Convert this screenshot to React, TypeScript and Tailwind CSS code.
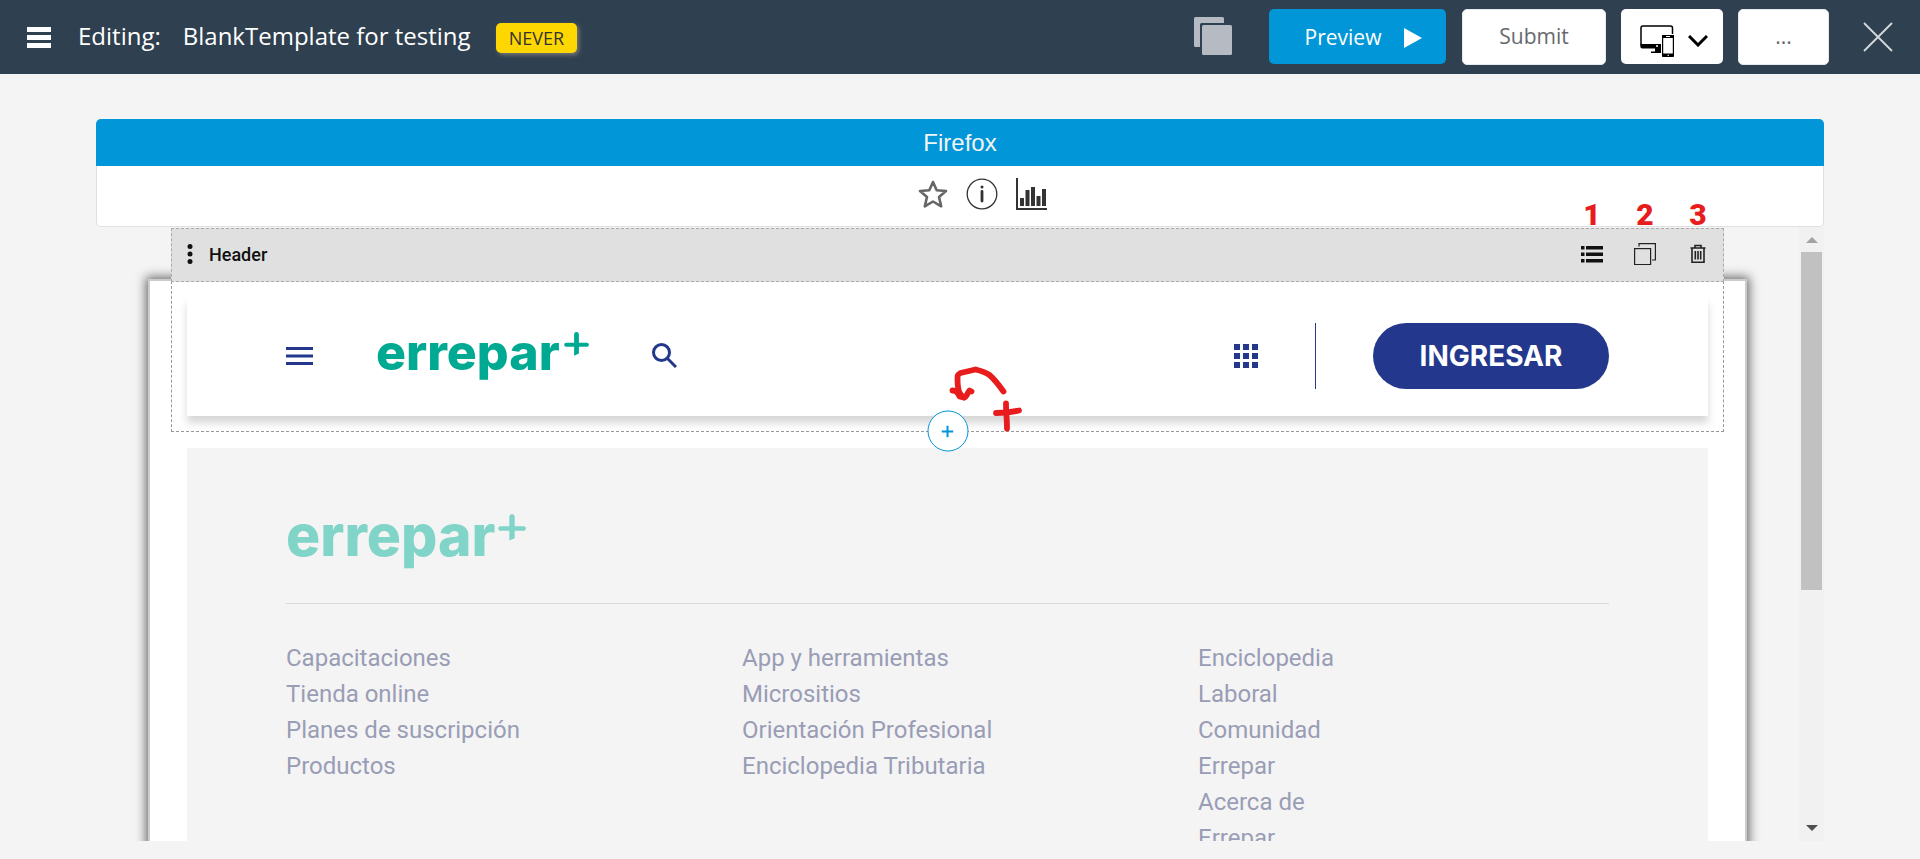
import React from "react";

const NOTE = "#e81c1c";

function Logo({ large = false }: { large?: boolean }) {
  return (
    <a
      href="#"
      aria-label="errepar+"
      className={
        large
          ? "flex h-[53px] w-[240px] items-start justify-between text-[#80d4c8]"
          : "flex h-[48px] w-[213px] items-start justify-between text-[#00a992]"
      }
    >
      <span
        className={
          large
            ? "font-['Inter'] text-[57px] leading-[44px] font-extrabold"
            : "font-['Inter'] text-[50px] leading-[40px] font-extrabold"
        }
      >
        errepar
      </span>
      <svg viewBox="0 0 25 24" className={large ? "h-[27px] w-[28px]" : "h-[24px] w-[25px]"} fill="currentColor">
        <path d="M10.100 2.500a2.400 2.400 0 0 1 4.800 0v8.300h8a2 2 0 0 1 0 4h-8v6.700l-4.800 2.200v-8.900H2.200a2 2 0 0 1 0-4h7.900z" />
      </svg>
    </a>
  );
}

function TopBar() {
  return (
    <header className="flex h-[74px] shrink-0 items-center bg-[#2f4050] pr-[27px] pl-[27px] font-['Open_Sans'] text-white">
      <button aria-label="Menu" className="flex w-[24px] flex-col gap-[3px]">
        <span className="h-[5px] w-full bg-white" />
        <span className="h-[5px] w-full bg-white" />
        <span className="h-[5px] w-full bg-white" />
      </button>
      <h1 className="ml-[27px] flex items-center gap-[22px] pb-0.5 text-[24px] leading-[32px]">
        <span>Editing:</span>
        <span>BlankTemplate for testing</span>
      </h1>
      <span className="mt-0.5 ml-[25px] flex h-[30px] items-center rounded-[5px] bg-[#ffd700] px-[13px] text-[18px] text-[#333] shadow-[2px_2px_4px_#777]">
        NEVER
      </span>
      <div className="ml-auto flex items-start">
        <button aria-label="Duplicate" className="mt-2 mr-[37px]">
          <svg viewBox="0 0 38 38" className="h-[38px] w-[38px]" fill="#b5bac3">
            <path d="M1.500 0h27a1.500 1.500 0 0 1 1.500 1.500V6H7.500A1.500 1.500 0 0 0 6 7.500V30H1.500A1.500 1.500 0 0 1 0 28.500v-27A1.500 1.500 0 0 1 1.500 0z" />
            <rect x="8" y="8" width="30" height="30" rx="1.500" />
          </svg>
        </button>
        <button className="flex h-[55px] w-[177px] items-center justify-center gap-[23px] rounded-[5px] bg-[#0096d8] pt-0.5 pl-3 text-[21px]">
          Preview
          <svg viewBox="0 0 18 20" className="h-[20px] w-[18px]" fill="white">
            <path d="M0 0l18 10L0 20z" />
          </svg>
        </button>
        <button className="ml-4 h-[56px] w-[144px] rounded-[5px] border border-[#e7eaec] bg-white text-[21px] text-[#676a6c]">
          Submit
        </button>
        <button aria-label="Devices" className="ml-[15px] flex h-[55px] w-[102px] items-center gap-[14px] rounded-[5px] bg-white pl-[19px]">
          <svg viewBox="0 0 34 32" className="mt-[8px] h-[32px] w-[34px]" fill="none" stroke="black">
            <path d="M32.500 9V3c0-1.300-.7-2-2-2H3C1.700 1 1 1.700 1 3v17" strokeWidth="1.500" />
            <path d="M.3 19H21v4.500H2.300a2 2 0 0 1-2-2zM15 23h6v5H11v-1.500h4z" fill="black" stroke="none" />
            <circle cx="17" cy="21" r="1" fill="white" stroke="none" />
            <rect x="22.600" y="10.600" width="10.800" height="20.800" rx="2" strokeWidth="1.200" />
            <path d="M22 10h12v3H22zM22 28.500h12V31a1 1 0 0 1-1 1H23a1 1 0 0 1-1-1z" fill="black" stroke="none" />
            <path d="M26 11.500h4M27.500 30.300h1.500" stroke="white" />
          </svg>
          <svg viewBox="0 0 20 12" className="mt-[8px] h-[12px] w-[20px]" fill="none" stroke="black" strokeWidth="3">
            <path d="M1 1l9 9 9-9" />
          </svg>
        </button>
        <button aria-label="More" className="ml-[15px] h-[56px] w-[91px] rounded-[5px] border border-[#e7eaec] bg-white text-[21px] text-[#676a6c]">
          ...
        </button>
        <button aria-label="Close" className="mt-[13px] ml-[34px]">
          <svg viewBox="0 0 30 30" className="h-[30px] w-[30px]" fill="none" stroke="#d5d9dd" strokeWidth="1.800">
            <path d="M1 1l28 28M29 1L1 29" />
          </svg>
        </button>
      </div>
    </header>
  );
}

function BrowserPanel() {
  return (
    <section className="shrink-0">
      <h2 className="flex h-[47px] items-center justify-center rounded-t-[5px] bg-[#0096d8] font-['Liberation_Sans'] text-[24px] text-[#f4f4f4]">
        Firefox
      </h2>
      <div className="flex h-[61px] items-center justify-center gap-[18px] rounded-b-[5px] border border-t-0 border-[#e0e0e0] bg-white pb-1 pl-[45px]">
        <button aria-label="Favourite">
          <svg viewBox="0 0 30 28" className="h-[28px] w-[30px]" fill="none" stroke="#666" strokeWidth="2.600" strokeLinejoin="round">
            <path d="M15 2l3.700 8.200 9.300.8-7 6 2.200 9.300L15 21.500l-8.200 4.800L9 17 2 11l9.300-.8z" />
          </svg>
        </button>
        <button aria-label="Information">
          <svg viewBox="0 0 32 32" className="h-[32px] w-[32px]" fill="none" stroke="#333">
            <circle cx="16" cy="16" r="14.800" strokeWidth="1.300" />
            <path d="M16 13.500v9.500" strokeWidth="2.800" strokeLinecap="round" />
            <circle cx="16" cy="9" r="1.500" fill="#333" stroke="none" />
          </svg>
        </button>
        <button aria-label="Statistics">
          <svg viewBox="0 0 31 32" className="h-[32px] w-[31px]" fill="#333">
            <path d="M0 0h2v30h29v2H0zM4 20h4v8H4zM9.500 12h4v16h-4zM15 9h4v19h-4zM20.500 18h4v10h-4zM26 11h4v17h-4z" />
          </svg>
        </button>
      </div>
    </section>
  );
}

function Note({ children }: { children: React.ReactNode }) {
  return (
    <span className="absolute bottom-[calc(100%+12px)] left-1/2 -translate-x-1/2 font-['Roboto'] text-[30px] leading-[32px] font-black text-[#e81c1c]">
      {children}
    </span>
  );
}

function BlockToolbar() {
  return (
    <div className="absolute -inset-x-px bottom-full flex h-[54px] items-center border border-dashed border-[#aaa] bg-[#e0e0e0] pr-[14px] pb-0.5 pl-[15px]">
      <button aria-label="Move block">
        <svg viewBox="0 0 6 20" className="h-[20px] w-[6px]" fill="#111">
          <circle cx="3" cy="2.500" r="2.500" />
          <circle cx="3" cy="10" r="2.500" />
          <circle cx="3" cy="17.500" r="2.500" />
        </svg>
      </button>
      <span className="ml-4 font-['Roboto'] text-[18px] font-medium text-[#111]">Header</span>
      <div className="ml-auto flex items-center gap-[31px]">
        <button aria-label="Block settings" className="relative">
          <svg viewBox="0 0 22 22" className="h-[22px] w-[22px]" fill="#111">
            <path d="M0 3h3.500v3.500H0zM5 3h17v3.500H5zM0 9.500h3.500V13H0zM5 9.500h17V13H5zM0 16h3.500v3.500H0zM5 16h17v3.500H5z" />
          </svg>
          <Note>1</Note>
        </button>
        <button aria-label="Copy block" className="relative">
          <svg viewBox="0 0 22 22" className="h-[22px] w-[22px]" fill="none" stroke="#222" strokeWidth="1.200">
            <path d="M5 3.500V.6h16.400V17H18" />
            <rect x=".6" y="5.600" width="16" height="16" />
          </svg>
          <Note>2</Note>
        </button>
        <button aria-label="Delete block" className="relative">
          <svg viewBox="0 0 22 22" className="h-[22px] w-[22px]" fill="none" stroke="#222" strokeWidth="1.600">
            <path d="M3.500 5h15M8 4.500V2.500h6v2M5 5v14.200h12V5M8.300 8v8.500M11 8v8.500M13.700 8v8.500" />
          </svg>
          <Note>3</Note>
        </button>
      </div>
    </div>
  );
}

function AddBlock() {
  return (
    <div className="absolute top-full left-1/2 -translate-x-1/2 -translate-y-1/2">
      <button
        aria-label="Add block"
        className="flex h-[41px] w-[41px] items-center justify-center rounded-full border border-[#0096d8] bg-white"
      >
        <svg viewBox="0 0 12 12" className="h-[12px] w-[12px]" stroke="#0096d8" strokeWidth="2">
          <path d="M6 0v12M0 6h12" />
        </svg>
      </button>
      <svg
        viewBox="0 0 80 70"
        className="pointer-events-none absolute bottom-[19px] left-[19px] h-[70px] w-[80px]"
        fill="none"
        stroke={NOTE}
        strokeWidth="5.800"
        strokeLinecap="round"
        strokeLinejoin="round"
      >
        <path d="M57 29C52 22 47 16 43 12.500C38 9 33 8 29 7L14 10.500C11 12 11 13 11 16C11 22 11 27 13.500 31" />
        <path d="M6 28c4 0 6 2 7 6l4 1c4 0 3-4 6-7l2 1" />
        <path d="M12 31l6 4" />
        <path d="M59.500 41c0 8 1 17 1 25M49.500 50.500c8 0 16-1 23-2.500" />
      </svg>
    </div>
  );
}

function HeaderBlock() {
  return (
    <section className="relative border border-dashed border-[#999] p-[15px]">
      <BlockToolbar />
      <div className="flex h-[119px] items-center bg-white px-[99px] pb-0.5 shadow-[0_7px_8px_rgba(0,0,0,0.16)]">
        <button aria-label="Site menu">
          <svg viewBox="0 0 27 18" className="h-[18px] w-[27px]" fill="#23378d">
            <path d="M0 0h27v3H0zM0 7.500h27v3H0zM0 15h27v3H0z" />
          </svg>
        </button>
        <div className="ml-[63px]">
          <Logo />
        </div>
        <button aria-label="Search" className="ml-[63px]">
          <svg viewBox="0 0 25 25" className="h-[25px] w-[25px]" fill="none" stroke="#23378d" strokeWidth="3">
            <circle cx="9.500" cy="9.500" r="8" />
            <path d="M15.500 15.500l8.500 8.500" />
          </svg>
        </button>
        <div className="ml-auto flex items-center gap-[57px]">
          <button aria-label="Apps">
            <svg viewBox="0 0 24 24" className="h-[24px] w-[24px]" fill="#23378d">
              <path d="M0 0h6v6H0zM9 0h6v6H9zM18 0h6v6h-6zM0 9h6v6H0zM9 9h6v6H9zM18 9h6v6h-6zM0 18h6v6H0zM9 18h6v6H9zM18 18h6v6h-6z" />
            </svg>
          </button>
          <span className="h-[66px] w-px bg-[#23378d]" />
          <button className="h-[66px] w-[236px] rounded-full bg-[#23378d] font-['Inter'] text-[28px] font-bold text-white">
            INGRESAR
          </button>
        </div>
      </div>
      <AddBlock />
    </section>
  );
}

const columns = [
  { links: ["Capacitaciones", "Tienda online", "Planes de suscripción", "Productos"], narrow: false },
  { links: ["App y herramientas", "Micrositios", "Orientación Profesional", "Enciclopedia Tributaria"], narrow: false },
  { links: ["Enciclopedia Laboral", "Comunidad Errepar", "Acerca de Errepar"], narrow: true },
];

function FooterBlock() {
  return (
    <footer className="mx-4 mt-4 bg-[#f4f4f4] px-[99px] pt-[66px] pb-20">
      <Logo large />
      <nav className="mt-9 grid grid-cols-3 gap-x-[45px] border-t border-[#d8d8d8] pt-9 font-['Roboto'] text-[24px] leading-[36px] text-[#999db5]">
        {columns.map((column) => (
          <ul key={column.links[0]} className={column.narrow ? "w-1/3" : ""}>
            {column.links.map((link) => (
              <li key={link}>
                <a href="#">{link}</a>
              </li>
            ))}
          </ul>
        ))}
      </nav>
    </footer>
  );
}

function ScrollBar() {
  return (
    <div aria-hidden className="flex w-[25px] shrink-0 flex-col items-center bg-[#f1f1f1] py-[10px]">
      <svg viewBox="0 0 12 6" className="h-[6px] w-[12px] shrink-0" fill="#a3a3a3">
        <path d="M6 0l6 6H0z" />
      </svg>
      <div className="my-[9px] w-[21px] flex-1">
        <div className="h-3/5 w-full bg-[#c1c1c1]" />
      </div>
      <svg viewBox="0 0 12 6" className="h-[6px] w-[12px] shrink-0" fill="#505050">
        <path d="M0 0h12L6 6z" />
      </svg>
    </div>
  );
}

export default function App() {
  return (
    <div className="flex h-screen flex-col bg-[#f4f4f4]">
      <TopBar />
      <main className="flex min-h-0 flex-1 flex-col px-[5%] pt-[45px] pb-[18px]">
        <BrowserPanel />
        <div className="-mt-7 flex min-h-0 flex-1 overflow-hidden">
          <div className="min-w-0 flex-1 px-[52px] pt-[80px]">
            <div className="border-2 border-[#ccc] bg-white px-[21px] shadow-[0_0_10px_2px_#666]">
              <HeaderBlock />
              <FooterBlock />
            </div>
          </div>
          <div className="flex pt-7">
            <ScrollBar />
          </div>
        </div>
      </main>
    </div>
  );
}
